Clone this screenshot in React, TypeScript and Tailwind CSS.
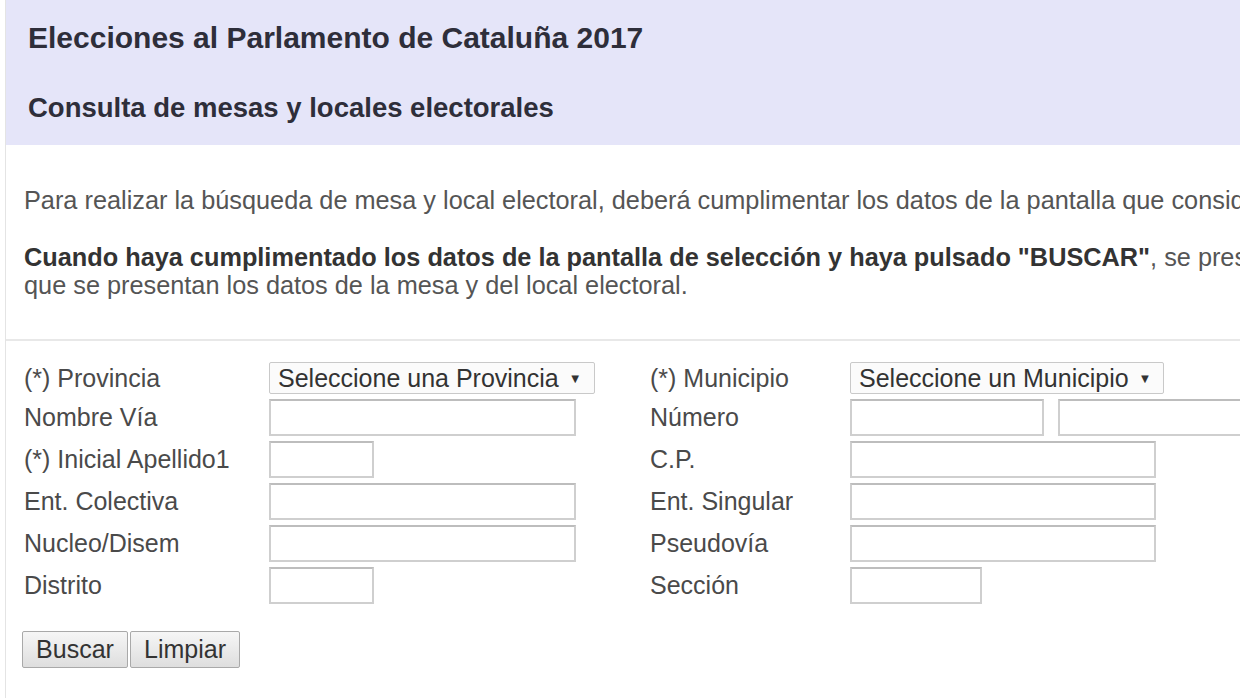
const font = { fontFamily: '"Liberation Sans", Arial, sans-serif' };

function TextInput({ w }: { w: string }) {
  return (
    <input
      type="text"
      className={`${w} h-[37px] border-2 border-[#cfcfcf] border-t-[#bdbdbd] bg-white outline-none`}
    />
  );
}

function SelectBox({ label, w }: { label: string; w: string }) {
  return (
    <div
      className={`${w} h-[32px] flex items-center gap-[10px] pl-[8px] border border-[#c9c9c9] rounded-[2px] bg-[#fbfbfb] text-[#333] text-[25px] leading-none`}
    >
      <span>{label}</span>
      <span className="text-[13px]">▼</span>
    </div>
  );
}

function Label({ children }: { children: React.ReactNode }) {
  return <div className="text-[25px] text-[#4a4a4a] leading-none whitespace-nowrap">{children}</div>;
}

export default function App() {
  return (
    <div className="w-[1240px] h-[698px] overflow-hidden bg-white" style={font}>
      <div className="ml-[5px] border-l border-[#e4e4e4] h-full">
        {/* Header */}
        <div className="bg-[#e5e5f9] pl-[22px] pt-[20px] pb-[20px]">
          <h1 className="text-[30px] leading-[36px] font-bold text-[#2e2e3a]">
            Elecciones al Parlamento de Cataluña 2017
          </h1>
          <h2 className="mt-[35px] text-[27.5px] leading-[34px] font-bold text-[#2e2e3a]">
            Consulta de mesas y locales electorales
          </h2>
        </div>

        {/* Intro */}
        <div className="pl-[18px] pt-[41px] pb-[40px] text-[25.3px] leading-[28px] text-[#555] whitespace-nowrap border-b-2 border-[#e8e8e8]">
          <p>
            Para realizar la búsqueda de mesa y local electoral, deberá cumplimentar los datos de la pantalla que considere oportunos.
          </p>
          <p className="mt-[29px]">
            <b className="text-[#333]">
              Cuando haya cumplimentado los datos de la pantalla de selección y haya pulsado "BUSCAR"
            </b>
            , se presentará una pantalla en la
            <br />
            que se presentan los datos de la mesa y del local electoral.
          </p>
        </div>

        {/* Form */}
        <div className="pl-[18px] pt-[21px]">
          <div className="grid grid-cols-[245px_381px_200px_1fr] items-center gap-y-[5px]">
            <Label>(*) Provincia</Label>
            <SelectBox label="Seleccione una Provincia" w="w-[326px]" />
            <Label>(*) Municipio</Label>
            <SelectBox label="Seleccione un Municipio" w="w-[314px]" />

            <Label>Nombre Vía</Label>
            <TextInput w="w-[307px]" />
            <Label>Número</Label>
            <div className="flex gap-[14px]">
              <TextInput w="w-[194px]" />
              <TextInput w="w-[220px]" />
            </div>

            <Label>(*) Inicial Apellido1</Label>
            <TextInput w="w-[105px]" />
            <Label>C.P.</Label>
            <TextInput w="w-[306px]" />

            <Label>Ent. Colectiva</Label>
            <TextInput w="w-[307px]" />
            <Label>Ent. Singular</Label>
            <TextInput w="w-[306px]" />

            <Label>Nucleo/Disem</Label>
            <TextInput w="w-[307px]" />
            <Label>Pseudovía</Label>
            <TextInput w="w-[306px]" />

            <Label>Distrito</Label>
            <TextInput w="w-[105px]" />
            <Label>Sección</Label>
            <TextInput w="w-[132px]" />
          </div>

          <div className="mt-[27px] -ml-[2px] flex gap-[2px]">
            <button className="h-[37px] w-[106px] border border-[#a9a9a9] rounded-[2px] bg-gradient-to-b from-[#f6f6f6] to-[#dedede] text-[25px] leading-none text-[#333]">
              Buscar
            </button>
            <button className="h-[37px] w-[110px] border border-[#a9a9a9] rounded-[2px] bg-gradient-to-b from-[#f6f6f6] to-[#dedede] text-[25px] leading-none text-[#333]">
              Limpiar
            </button>
          </div>
        </div>
      </div>
    </div>
  );
}
